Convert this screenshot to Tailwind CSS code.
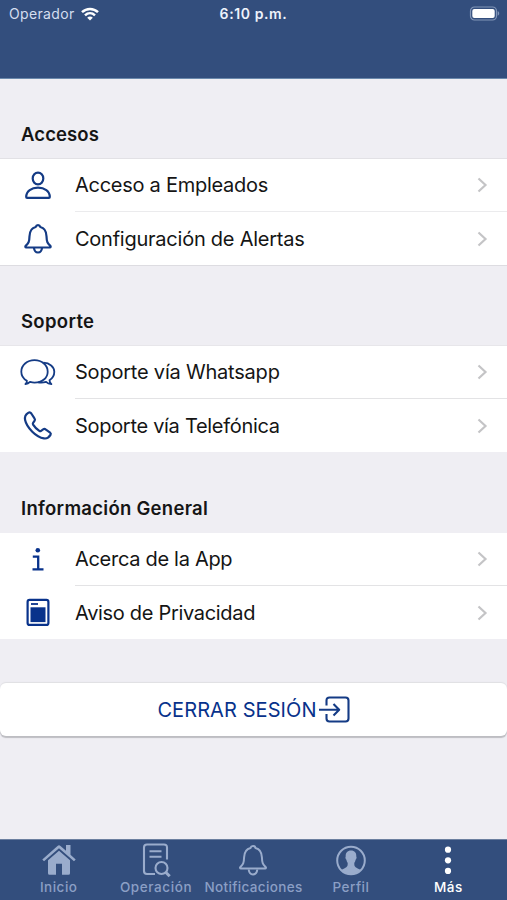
<!DOCTYPE html>
<html lang="es">
<head>
<meta charset="utf-8">
<title>Más</title>
<script src="https://cdn.jsdelivr.net/npm/@tailwindcss/browser@4"></script>
</head>
<body class="bg-[#efeef3]">
<div class="w-[507px] h-[900px] flex flex-col overflow-hidden bg-[#efeef3] font-['Inter','Liberation_Sans',sans-serif] text-[#151515]">
  <header class="h-[79px] shrink-0 bg-[#334e7d] border-b border-[#6b89ac]">
    <div class="h-[27px] grid grid-cols-3 items-center pl-[9px] pr-[7px]">
      <div class="flex items-center gap-[6px] text-[#d5def0] text-[14px]"><span class="tracking-[0.35px]">Operador</span>
        <svg class="w-[18px] h-[14px]" viewBox="0 0 18 14" fill="none" stroke="#fff" stroke-width="2.5"><path d="M1 5.2C5.6.8 12.4.8 17 5.2M4 8.3c2.9-2.7 7.1-2.7 10 0"/><path d="M6.2 10.7c1.6-1.5 4-1.5 5.6 0L9 13.6z" fill="#fff" stroke="none"/></svg>
      </div>
      <div class="text-center text-[14px] font-semibold text-[#eef3fc] tracking-[0.6px] whitespace-nowrap"><span class="mr-[2px]">6:10 p.m.</span></div>
      <svg class="justify-self-end w-[31px] h-[15px]" viewBox="0 0 31 15"><rect x="1.5" y="1" width="26" height="13" rx="4" fill="none" stroke="#8296b8" stroke-width="1.2"/><rect x="3.3" y="2.9" width="22.4" height="9.2" rx="2" fill="#fff"/><path d="M28.7 5.3c2 .6 2 3.8 0 4.4z" fill="#8296b8"/></svg>
    </div>
  </header>
  <main class="flex-1 flex flex-col">
    <section>
      <h2 class="h-20 pt-[41px] pl-[21px] border-b border-[#e2e1e5] text-[18.5px] leading-7 font-semibold"><span class="tracking-[0.1px]">Accesos</span></h2>
      <div class="bg-white border-b border-[#dddce1]">
        <div class="flex h-[53px]"><div class="w-[75px] flex items-center justify-center">
          <svg class="w-8 h-8" viewBox="0 0 32 32" fill="none" stroke="#143b85" stroke-width="2.2"><ellipse cx="16" cy="8.500" rx="5.300" ry="5.900"/><path d="M4.200 27c0-6 5.300-9.300 11.800-9.300s11.800 3.300 11.800 9.300q0 .9-.9.900H5.100q-.9 0-.9-.9z"/></svg></div>
          <div class="flex-1 flex items-center justify-between border-b border-[#ebebed] pr-[18px] text-[20px]"><span class="tracking-[-0.270px]">Acceso a Empleados</span><svg class="w-3 h-4" viewBox="0 0 12 16" fill="none" stroke="#c4c4c6" stroke-width="2.200"><path d="m1.500 1.500 7 6.500-7 6.500"/></svg></div></div>
        <div class="flex h-[53px]"><div class="w-[75px] flex items-center justify-center">
          <svg class="w-8 h-8" viewBox="0 0 32 32" fill="none" stroke="#143b85" stroke-width="2.200" stroke-linejoin="round"><path d="M16 2.200c-1.400 0-2 .7-2.300 1.800-4.400 1-6 4.400-6.200 9.200-.2 6-1 7-3.800 9.700-.7.700-.4 1.600.5 1.600h23.600c.9 0 1.200-.9.500-1.600-2.800-2.700-3.600-3.700-3.800-9.700-.2-4.800-1.800-8.200-6.200-9.200-.3-1.100-.9-1.800-2.300-1.800z"/><path d="M12 25c.3 2.900 1.800 4.500 4 4.500s3.700-1.600 4-4.500"/></svg></div>
          <div class="flex-1 flex items-center justify-between pr-[18px] text-[20px]"><span class="tracking-[-0.240px]">Configuración de Alertas</span><svg class="w-3 h-4" viewBox="0 0 12 16" fill="none" stroke="#c4c4c6" stroke-width="2.200"><path d="m1.500 1.500 7 6.500-7 6.500"/></svg></div></div>
      </div>
    </section>
    <section>
      <h2 class="h-20 pt-[41px] pl-[21px] border-b border-[#e7e6ea] text-[18.5px] leading-7 font-semibold"><span class="tracking-[0.320px]">Soporte</span></h2>
      <div class="bg-white border-b border-[#efeef3]">
        <div class="flex h-[53px]"><div class="w-[75px] flex items-center justify-center">
          <svg class="w-9 h-8" viewBox="0 0 36 32" fill="none" stroke="#143b85" stroke-width="1.800" stroke-linejoin="round"><path d="M6.900 23.800C3.300 21.700 1.300 18.500 1.300 14.700 1.300 8.300 7 3.200 14.500 3.200S27.700 8.300 27.700 14.700 22 25.600 14.500 25.600c-1.700 0-3.100-.3-4.500-.700-1.200 1.200-2.700 2-4.600 2.300 1.100-1 1.600-2 1.500-3.400z"/><path d="M23.500 5.700c6 .3 10.800 4 10.800 9.100 0 3.500-1.700 6.500-4.800 8.400.1 1.600.7 2.900 1.900 4-2.300-.2-4-1-5.300-2.300-2.200.7-5 .9-8.100.500"/></svg></div>
          <div class="flex-1 flex items-center justify-between border-b border-[#e3e3e5] pr-[18px] text-[20px]"><span class="tracking-[-0.210px]">Soporte vía Whatsapp</span><svg class="w-3 h-4" viewBox="0 0 12 16" fill="none" stroke="#c4c4c6" stroke-width="2.200"><path d="m1.500 1.500 7 6.500-7 6.500"/></svg></div></div>
        <div class="flex h-[53px]"><div class="w-[75px] flex items-center justify-center">
          <svg class="w-8 h-8" viewBox="0 0 32 32" fill="none" stroke="#143b85" stroke-width="2.200" stroke-linejoin="round"><path d="M6.200 2.900C3.500 4.600 2.500 7.100 3.100 10c.8 3.800 3.300 7.800 7.200 11.700s7.900 6.100 11.700 6.700c2.700.4 5-.9 6.500-3.500.5-.9.400-1.700-.4-2.300l-4.500-3.200c-.8-.6-1.700-.5-2.500 0l-2 1.400c-.6.400-1.200.4-1.800 0-2.500-1.600-4.700-3.800-6.200-6.200-.4-.7-.4-1.200 0-1.800l1.400-2c.6-.8.6-1.700 0-2.500L9.300 3.500c-.8-1.100-1.900-1.300-3.100-.6z"/></svg></div>
          <div class="flex-1 flex items-center justify-between pr-[18px] text-[20px]"><span class="tracking-[-0.300px]">Soporte vía Telefónica</span><svg class="w-3 h-4" viewBox="0 0 12 16" fill="none" stroke="#c4c4c6" stroke-width="2.200"><path d="m1.500 1.500 7 6.500-7 6.500"/></svg></div></div>
      </div>
    </section>
    <section>
      <h2 class="h-20 pt-[41px] pl-[21px] border-b border-[#efeef3] text-[18.5px] leading-7 font-semibold"><span class="tracking-[0.280px]">Información General</span></h2>
      <div class="bg-white border-b border-[#efeef3]">
        <div class="flex h-[53px]"><div class="w-[75px] flex items-center justify-center">
          <svg class="w-8 h-8" viewBox="0 0 32 32" fill="none" stroke="#08328b" stroke-width="2.300"><circle cx="15.800" cy="6.300" r="2.300" fill="#08328b" stroke="none"/><path d="M10.800 12.600h5.400V25M10.500 25.400H21.500"/></svg></div>
          <div class="flex-1 flex items-center justify-between border-b border-[#e3e3e5] pr-[18px] text-[20px]"><span class="tracking-[-0.300px]">Acerca de la App</span><svg class="w-3 h-4" viewBox="0 0 12 16" fill="none" stroke="#c4c4c6" stroke-width="2.200"><path d="m1.500 1.500 7 6.500-7 6.500"/></svg></div></div>
        <div class="flex h-[53px]"><div class="w-[75px] flex items-center justify-center">
          <svg class="w-8 h-8" viewBox="0 0 32 32"><rect x="5.600" y="2.900" width="20.800" height="25" rx="2" fill="#fff" stroke="#08328b" stroke-width="2.200"/><path d="M9 7h7" stroke="#08328b" stroke-width="1.800"/><rect x="8.500" y="10.300" width="15" height="14.800" fill="#08328b"/></svg></div>
          <div class="flex-1 flex items-center justify-between pr-[18px] text-[20px]"><span class="tracking-[-0.310px]">Aviso de Privacidad</span><svg class="w-3 h-4" viewBox="0 0 12 16" fill="none" stroke="#c4c4c6" stroke-width="2.200"><path d="m1.500 1.500 7 6.500-7 6.500"/></svg></div></div>
      </div>
    </section>
    <button class="mt-[43px] h-[53px] rounded-[6px] bg-white shadow-[0_2px_1px_#bdbdc2,0_-1px_1px_#dfdfe3] flex items-center justify-center text-[20px] text-[#08328b]"><span class="tracking-[0.080px]">CERRAR SESIÓN</span>
      <svg class="w-8 h-7 ml-[1px]" viewBox="0 0 32 28" fill="none" stroke="#143b85" stroke-width="2.100" stroke-linejoin="round"><path d="M8.500 9.500V4.500q0-3 3-3h16q3 0 3 3v18q0 3-3 3h-16q-3 0-3-3v-4.500M1 13.700h20M15.500 8l5.700 5.700-5.700 5.700"/></svg></button>
  </main>
  <nav class="h-[61px] shrink-0 bg-[#334e7d] border-t border-[#6c7f9f] px-[10px] grid grid-cols-5 text-[13.5px] font-medium text-[#8b9fc5]">
    <div class="flex flex-col items-center pt-[2px]">
      <svg class="w-9 h-9" viewBox="0 0 36 36" fill="#9aaccc"><path d="M7 18.300 18 8.800l11 9.500v13q0 1.500-1.500 1.500H21v-11h-6v11H8.500Q7 32.800 7 31.300z"/><path d="M1.300 17.500 16.500 4q1.500-1.300 3 0L25 8.800V3h4.500v9.800l5.200 4.700-1.700 1.800L18 6.300 3 19.300z"/></svg><span class="leading-4 mt-[1px] tracking-[0.500px]">Inicio</span></div>
    <div class="flex flex-col items-center pt-[2px]">
      <svg class="w-9 h-9" viewBox="0 0 36 36" fill="none" stroke="#9aaccc" stroke-width="2.100"><path d="M29 17.500V5.500q0-3-3-3H9q-3 0-3 3v23.500q0 3 3 3h8M11.500 9.300H23.500M11.500 14.700H23.500"/><circle cx="23.500" cy="26" r="6"/><path d="m27.700 30.300 4 4" stroke-width="3"/></svg><span class="leading-4 mt-[1px] tracking-[0.600px]">Operación</span></div>
    <div class="flex flex-col items-center pt-[2px]">
      <svg class="w-9 h-9" viewBox="0 0 36 36" fill="none" stroke="#9aaccc" stroke-width="2" stroke-linejoin="round"><path d="M18 4c-1.500 0-2.200.7-2.500 1.900-4.400 1-6.200 4.300-6.400 9.400-.2 6-1 7.100-3.700 9.600-.7.700-.4 1.600.5 1.600h24.200c.9 0 1.200-.9.500-1.600-2.700-2.500-3.500-3.600-3.700-9.600-.2-5.100-2-8.400-6.400-9.400C20.200 4.700 19.500 4 18 4z"/><path d="M13.700 27.500c.3 3 1.900 4.900 4.300 4.900s4-1.900 4.300-4.900"/></svg><span class="leading-4 mt-[1px] whitespace-nowrap tracking-[0.350px]">Notificaciones</span></div>
    <div class="flex flex-col items-center pt-[2px]">
      <svg class="w-9 h-9" viewBox="0 0 36 36"><circle cx="18" cy="18.500" r="13.800" fill="none" stroke="#9aaccc" stroke-width="2"/><path d="M18 8.500c-3.600 0-5.600 2.400-5.300 6-.6.500-.2 2.700.7 3.300.3 1.500.8 2.500 1.300 3.200 0 3.500-.3 4.100-5 6.200l-1.600.8c4.900 5.500 14.900 5.500 19.800 0l-1.600-.8c-4.700-2.100-5-2.700-5-6.200.5-.7 1-1.700 1.300-3.200.9-.6 1.300-2.800.7-3.300.3-3.600-1.700-6-5.300-6z" fill="#9aaccc"/></svg><span class="leading-4 mt-[1px] tracking-[0.500px]">Perfil</span></div>
    <div class="flex flex-col items-center pt-[2px] text-white">
      <svg class="w-9 h-9" viewBox="0 0 36 36" fill="#fff"><circle cx="18" cy="7.700" r="3.100"/><circle cx="18" cy="18.300" r="3.100"/><circle cx="18" cy="28.900" r="3.100"/></svg><span class="leading-4 mt-[1px] tracking-[0.500px]">Más</span></div>
  </nav>
</div>
</body>
</html>
